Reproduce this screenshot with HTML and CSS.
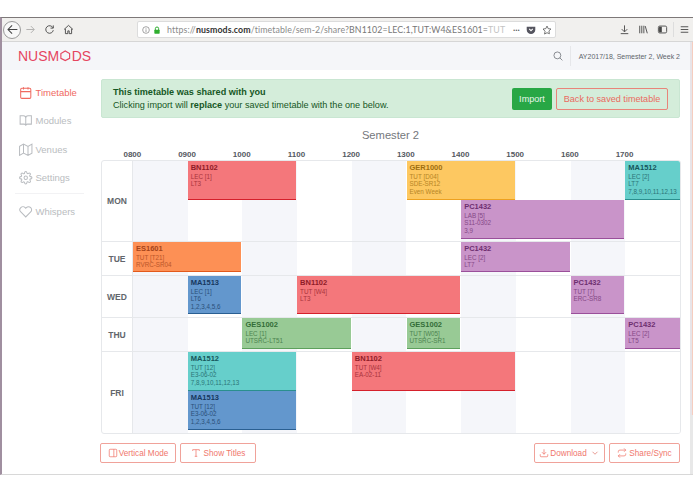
FILE: index.html
```html
<!DOCTYPE html>
<html lang="en">
<head>
<meta charset="utf-8">
<title>NUSMods Timetable</title>
<link rel="stylesheet" href="styles.css">
</head>
<body>
<div class="window">
  <header class="browser">
    <button class="back"><svg viewBox="0 0 16 16" width="13" height="13"><path d="M14 8H3M7.500 3 2.500 8l5 5" class="st"/></svg></button>
    <svg class="bi dim" viewBox="0 0 16 16"><path d="M2 8h11M8.500 3l5 5-5 5" class="st"/></svg>
    <svg class="bi" viewBox="0 0 16 16"><path d="M13 5.500A5.500 5.500 0 1 0 13.500 9M13.500 2v4h-4" class="st"/></svg>
    <svg class="bi" viewBox="0 0 16 16"><path d="M1.500 8 8 2l6.500 6M3.500 7v7h3.500v-4h2v4h3.500V7" class="st"/></svg>
    <div class="urlbar">
      <svg class="ui" viewBox="0 0 12 12"><circle cx="6" cy="6" r="5" fill="none" stroke="#777"/><path d="M6 5v4M6 3v1" stroke="#777"/></svg>
      <svg class="ui" viewBox="0 0 12 12"><path d="M3.500 6V4a2.500 2.500 0 0 1 5 0v2" fill="none" stroke="#2fae2f" stroke-width="1.500"/><rect x="2" y="5.500" width="8" height="6" rx="1" fill="#2fae2f"/></svg>
      <div class="url"><span class="g">https://</span><b>nusmods.com</b><span class="g">/timetable/sem-2/share?</span><span class="m">BN1102=LEC:1,TUT:W4&amp;ES1601=</span><span class="f">TUT</span></div>
      <span class="dots">•••</span>
      <svg class="ui2" viewBox="0 0 14 14"><path d="M1 2.500h12v4a6 6 0 0 1-12 0z" fill="#55555f"/><path d="M4.500 5.500 7 8l2.500-2.500" fill="none" stroke="#fff" stroke-width="1.500"/></svg>
      <svg class="ui2" viewBox="0 0 14 14"><path d="m7 1.500 1.700 3.600 3.800.5-2.800 2.700.7 3.900L7 10.800l-3.400 1.900.7-3.900L1.500 5.600l3.800-.5z" fill="none" stroke="#444"/></svg>
    </div>
    <div class="tools">
      <svg class="bi" viewBox="0 0 16 16"><path d="M8 2v9M4 7.500 8 11.500l4-4M2.500 14h11" class="st"/></svg>
      <svg class="bi" viewBox="0 0 16 16"><path d="M2.500 2.500v11M5.500 2.500v11M8.500 2.500v11M10.500 3l3 10.500" class="st"/></svg>
      <svg class="bi" viewBox="0 0 16 16"><rect x="2" y="3" width="12" height="10" rx="2" class="st"/><rect x="3" y="4" width="4" height="8" fill="#444"/></svg>
      <span class="sep"></span>
      <svg class="bi" viewBox="0 0 16 16"><path d="M2.500 4h11M2.500 8h11M2.500 12h11" class="st"/></svg>
    </div>
  </header>

  <div class="page">
    <div class="content">
      <nav class="topnav">
        <div class="logo">NUSM<svg class="hex" viewBox="0 0 12 13"><path d="M6 1 11 4v5.500L6 12 1 9.500V4z"/></svg>DS</div>
        <div class="navright">
          <svg class="search" viewBox="0 0 16 16"><circle cx="7" cy="7" r="5.500" fill="none" stroke="#5a5f66" stroke-width="1.100"/><path d="m11 11 4 4" stroke="#5a5f66" stroke-width="1.100"/></svg>
          <span class="week">AY2017/18, Semester 2, Week 2</span>
        </div>
      </nav>

      <div class="body">
        <aside class="side">
          <a class="item active"><svg class="ic" viewBox="0 0 24 24"><rect x="3" y="4" width="18" height="18" rx="2"/><path d="M16 2v4M8 2v4M3 10h18"/></svg>Timetable</a>
          <a class="item"><svg class="ic" viewBox="0 0 24 24"><path d="M2 3h6a4 4 0 0 1 4 4v14a3 3 0 0 0-3-3H2zM22 3h-6a4 4 0 0 0-4 4v14a3 3 0 0 1 3-3h7z"/></svg>Modules</a>
          <a class="item"><svg class="ic" viewBox="0 0 24 24"><path d="M1 6v16l7-4 8 4 7-4V2l-7 4-8-4zM8 2v16M16 6v16"/></svg>Venues</a>
          <a class="item"><svg class="ic" viewBox="0 0 24 24"><circle cx="12" cy="12" r="3"/><path d="M19.400 15a1.650 1.650 0 0 0 .33 1.820l.06.06a2 2 0 1 1-2.830 2.830l-.06-.06a1.650 1.650 0 0 0-2.900 1.170V21a2 2 0 0 1-4 0v-.09A1.650 1.650 0 0 0 7.200 19.800l-.06.06a2 2 0 1 1-2.830-2.830l.06-.06A1.650 1.650 0 0 0 3.200 14H3a2 2 0 0 1 0-4h.09A1.650 1.650 0 0 0 4.200 7.200l-.06-.06a2 2 0 1 1 2.830-2.830l.06.06A1.650 1.650 0 0 0 10 3.200V3a2 2 0 0 1 4 0v.09a1.650 1.650 0 0 0 2.800 1.110l.06-.06a2 2 0 1 1 2.830 2.830l-.06.06A1.650 1.650 0 0 0 20.800 10H21a2 2 0 0 1 0 4h-.09a1.650 1.650 0 0 0-1.510 1z"/></svg>Settings</a>
          <hr class="rule">
          <a class="item"><svg class="ic" viewBox="0 0 24 24"><path d="M20.800 4.600a5.500 5.500 0 0 0-7.800 0L12 5.700l-1-1.100a5.500 5.500 0 0 0-7.800 7.800L12 21.200l8.800-8.800a5.500 5.500 0 0 0 0-7.800z"/></svg>Whispers</a>
        </aside>

        <main class="main">
          <section class="alert">
            <div class="alert-text">
              <strong>This timetable was shared with you</strong>
              <p>Clicking import will <b>replace</b> your saved timetable with the one below.</p>
            </div>
            <button class="btn-import">Import</button>
            <button class="btn-back">Back to saved timetable</button>
          </section>

          <h2 class="sem">Semester 2</h2>

          <div class="hours"><span>0800</span><span>0900</span><span>1000</span><span>1100</span><span>1200</span><span>1300</span><span>1400</span><span>1500</span><span>1600</span><span>1700</span></div>

          <div class="table">
            <div class="day">
              <div class="label">MON</div>
              <div class="rows">
                <div class="row h39">
                  <div class="ev red s2 w2"><b>BN1102</b><i>LEC [1]</i><i>LT3</i></div>
                  <div class="ev yellow s6 w2"><b>GER1000</b><i>TUT [D04]</i><i>SDE-SR12</i><i>Even Week</i></div>
                  <div class="ev teal s10 w1"><b>MA1512</b><i>LEC [2]</i><i>LT7</i><i>7,8,9,10,11,12,13</i></div>
                </div>
                <div class="row h41">
                  <div class="ev purple s7 w3 b2"><b>PC1432</b><i>LAB [5]</i><i>S11-0302</i><i>3,9</i></div>
                </div>
              </div>
            </div>
            <div class="day">
              <div class="label">TUE</div>
              <div class="rows">
                <div class="row h33">
                  <div class="ev orange s1 w2 b3"><b>ES1601</b><i>TUT [T21]</i><i>RVRC-SR04</i></div>
                  <div class="ev purple s7 w2 b3"><b>PC1432</b><i>LEC [2]</i><i>LT7</i></div>
                </div>
              </div>
            </div>
            <div class="day">
              <div class="label">WED</div>
              <div class="rows">
                <div class="row h41">
                  <div class="ev blue s2 w1 b3"><b>MA1513</b><i>LEC [1]</i><i>LT6</i><i>1,2,3,4,5,6</i></div>
                  <div class="ev red s4 w3 b3"><b>BN1102</b><i>TUT [W4]</i><i>LT3</i></div>
                  <div class="ev purple s9 w1 b3"><b>PC1432</b><i>TUT [7]</i><i>ERC-SR8</i></div>
                </div>
              </div>
            </div>
            <div class="day">
              <div class="label">THU</div>
              <div class="rows">
                <div class="row h33">
                  <div class="ev green s3 w2 b2"><b>GES1002</b><i>LEC [1]</i><i>UTSRC-LT51</i></div>
                  <div class="ev green s6 w1 b2"><b>GES1002</b><i>TUT [W05]</i><i>UTSRC-SR1</i></div>
                  <div class="ev purple s10 w1 b2"><b>PC1432</b><i>LEC [2]</i><i>LT5</i></div>
                </div>
              </div>
            </div>
            <div class="day last">
              <div class="label">FRI</div>
              <div class="rows">
                <div class="row h39">
                  <div class="ev teal s2 w2"><b>MA1512</b><i>TUT [12]</i><i>E3-06-02</i><i>7,8,9,10,11,12,13</i></div>
                  <div class="ev red s5 w3"><b>BN1102</b><i>TUT [W4]</i><i>EA-02-11</i></div>
                </div>
                <div class="row h42">
                  <div class="ev blue s2 w2 b3"><b>MA1513</b><i>TUT [12]</i><i>E3-06-02</i><i>1,2,3,4,5,6</i></div>
                </div>
              </div>
            </div>
          </div>

          <div class="actions">
            <button class="btn vm"><svg class="bic" viewBox="0 0 24 24"><rect x="3" y="3" width="18" height="18" rx="2"/><path d="M14 3v18"/></svg>Vertical Mode</button>
            <button class="btn titles"><svg class="bic" viewBox="0 0 24 24"><path d="M4 7V4h16v3M9 20h6M12 4v16"/></svg>Show Titles</button>
            <span class="spacer"></span>
            <button class="btn dl"><svg class="bic" viewBox="0 0 24 24"><path d="M21 15v4a2 2 0 0 1-2 2H5a2 2 0 0 1-2-2v-4M7 10l5 5 5-5M12 15V3"/></svg>Download<svg class="bic chev" viewBox="0 0 24 24"><path d="m6 9 6 6 6-6"/></svg></button>
            <button class="btn share"><svg class="bic" viewBox="0 0 24 24"><path d="m17 1 4 4-4 4M3 11V9a4 4 0 0 1 4-4h14M7 23l-4-4 4-4M21 13v2a4 4 0 0 1-4 4H3"/></svg>Share/Sync</button>
          </div>
        </main>
      </div>
    </div>
    <div class="scrollbar"><span class="thumb"></span></div>
  </div>
</div>
</body>
</html>
```
FILE: styles.css
```css
* { box-sizing: border-box; }
html, body { margin: 0; height: 100%; background: #fff; overflow: hidden; }
body { padding: 17px 2px 0 0; font-family: "Liberation Sans", Arial, sans-serif; color: #555; }
button { font-family: inherit; margin: 0; }
.window { border-top: 1px solid #7d7878; border-left: 2px solid #a08fa0; height: 458px; display: flex; flex-direction: column; border-bottom: 1px solid #d8d8d8; }
.st { fill: none; stroke: #444; stroke-width: 1.300; }

.browser { height: 24px; flex: none; background: #f1f0ee; border-bottom: 1px solid #d6d6d6; display: flex; align-items: center; padding-left: 1px; gap: 6px; }
.back { width: 18px; height: 18px; margin-right: -3px; border-radius: 50%; border: 1px solid #9a9a9a; background: #f8f8f8; padding: 0; display: flex; align-items: center; justify-content: center; flex: none; }
.bi { width: 11px; height: 11px; flex: none; }
.bi.dim { opacity: .4; }
.browser > .bi { margin: 0 1px; }
.urlbar { width: 419px; height: 17px; margin-left: 56px; flex: none; background: #fff; border: 1px solid #dcdcdc; border-radius: 2px; display: flex; align-items: center; padding: 0 3px 0 4px; gap: 3px; }
.ui { width: 8px; height: 8px; flex: none; }
.ui2 { width: 10px; height: 10px; flex: none; margin-left: 3px; }
.url { flex: 1; min-width: 0; margin-left: 3px; white-space: nowrap; font: 8.800px/12px Lato, sans-serif; letter-spacing: .1px; color: #777; }
.url b { color: #333; font-weight: 700; }
.url .g { color: #8a8a8a; }
.url .m { color: #777; }
.url .f { color: #c4c4c4; }
.dots { font-size: 5px; color: #555; letter-spacing: .5px; flex: none; }
.tools { margin-left: auto; display: flex; align-items: center; gap: 8px; padding-right: 3px; }
.sep { width: 1px; height: 15px; background: #ddd; margin: 0 -3px; }

.page { flex: 1; min-height: 0; display: flex; background: #fff; }
.content { flex: 1; min-width: 0; display: flex; flex-direction: column; }
.topnav { height: 28px; flex: none; background: #f5f6f9; display: flex; align-items: center; justify-content: space-between; padding-left: 16px; padding-right: 10px; }
.logo { color: #e5455f; font-size: 14px; display: flex; align-items: center; }
.hex { width: 10.500px; height: 11.500px; margin: 0 1px; fill: none; stroke: #e5455f; stroke-width: 1.300; }
.navright { display: flex; align-items: center; height: 100%; }
.search { width: 10px; height: 10px; margin-right: 7px; }
.week { font-size: 7px; color: #60656c; border-left: 1px solid #e6e7ea; height: 20px; display: flex; align-items: center; padding-left: 8px; }

.body { flex: 1; min-height: 0; display: flex; }
.side { width: 99px; flex: none; padding: 8px 0 0 17px; }
.item { display: flex; align-items: center; gap: 3px; height: 28.500px; font-size: 9.500px; color: #b9bcc0; }
.item.active { color: #f0695f; }
.ic { width: 13.500px; height: 13.500px; fill: none; stroke: currentColor; stroke-width: 1.800; flex: none; }
.rule { margin: 1px 17px 3px -4px; border: 0; border-top: 1px solid #f2f2f4; }
.main { flex: 1; min-width: 0; padding-top: 9px; }
.alert { height: 39px; width: 579px; border: 1px solid #c9e6d2; border-radius: 2px; background: #d4edda; color: #155724; display: flex; align-items: center; padding: 0 11px 0 11px; font-size: 9.100px; }
.alert-text { flex: 1; line-height: 13px; }
.alert-text strong { display: block; font-weight: 700; }
.alert-text p { margin: 0; }
.btn-import { width: 40px; height: 22px; border: 0; border-radius: 2px; background: #28a745; color: #e9f6ec; font-size: 9.100px; padding: 0; margin-right: 4px; }
.btn-back { width: 112px; height: 22px; border: 1px solid #e8857a; border-radius: 2px; background: transparent; color: #ea6a5e; font-size: 9.100px; padding: 0; }
.sem { margin: 10px 0 7px; font-weight: 400; font-size: 11.200px; line-height: 14px; text-align: center; color: #74777c; width: 579px; }
.hours { display: grid; grid-template-columns: repeat(10, 54.700px); margin-left: 4px; height: 11px; align-items: center; text-align: center; font-size: 8px; font-weight: 700; color: #55595f; }
.table { width: 580px; border: 1px solid #e6e8eb; border-radius: 3px; overflow: hidden; }
.day { display: flex; border-bottom: 1px solid #e6e8eb; }
.day.last { border-bottom: 0; }
.label { width: 31px; flex: none; border-right: 1px solid #e6e8eb; display: flex; align-items: center; justify-content: center; font-size: 8.500px; font-weight: 700; color: #62666c; }
.rows { flex: 1; min-width: 0; display: flex; flex-direction: column; }
.row { display: grid; grid-template-columns: repeat(10, 1fr); background: repeating-linear-gradient(to right, #f5f6fa 0, #f5f6fa 54.700px, #fff 54.700px, #fff 109.400px); }
.h33 { height: 33px; }
.h39 { height: 39px; }
.h41 { height: 41px; }
.h42 { height: 42px; }
.ev { grid-row: 1; border-bottom: 1.500px solid; padding: 3px 3px 0; margin-right: 1px; font-size: 6.300px; line-height: 7.800px; overflow: hidden; white-space: nowrap; }
.ev b { display: block; font-size: 7.500px; line-height: 8.500px; }
.ev i { display: block; font-style: normal; opacity: .75; }
.s10 { margin-right: 0; }
.b2 { margin-bottom: 2px; }
.b3 { margin-bottom: 3px; }
.s1 { grid-column-start: 1; } .s2 { grid-column-start: 2; } .s3 { grid-column-start: 3; } .s4 { grid-column-start: 4; }
.s5 { grid-column-start: 5; } .s6 { grid-column-start: 6; } .s7 { grid-column-start: 7; } .s9 { grid-column-start: 9; } .s10 { grid-column-start: 10; }
.w1 { grid-column-end: span 1; } .w2 { grid-column-end: span 2; } .w3 { grid-column-end: span 3; }
.red { background: #f4777b; border-color: #d5202b; color: #8f1c28; }
.yellow { background: #fdc861; border-color: #eda11f; color: #a06f10; }
.teal { background: #66cfcb; border-color: #2a8f8e; color: #17565b; }
.purple { background: #c994c9; border-color: #9a4f9a; color: #6e2f70; }
.orange { background: #fd9055; border-color: #e2591b; color: #a5441a; }
.blue { background: #6397cd; border-color: #2a5f92; color: #17385e; }
.green { background: #98ca95; border-color: #5da05c; color: #336d38; }
.actions { display: flex; gap: 4px; margin-top: 9px; margin-left: -1px; width: 580px; }
.spacer { flex: 1; }
.btn { height: 20px; border: 1px solid #f0a29a; border-radius: 2px; background: #fff; color: #f0766c; font-size: 8.200px; padding: 0; display: flex; align-items: center; justify-content: center; gap: 1px; flex: none; }
.vm { width: 76px; }
.titles { width: 76px; gap: 3px; }
.dl { width: 71px; }
.share { width: 71px; gap: 2px; }
.bic { width: 10px; height: 10px; fill: none; stroke: currentColor; stroke-width: 1.800; flex: none; }
.chev { margin-left: 2px; color: #e07a70; }
.scrollbar { width: 3px; flex: none; background: #e8e8e8; }
.thumb { display: block; height: 373px; background: linear-gradient(to right, #e8e4e8 0, #e8e4e8 2px, #f6cdbf 2px); }
```
